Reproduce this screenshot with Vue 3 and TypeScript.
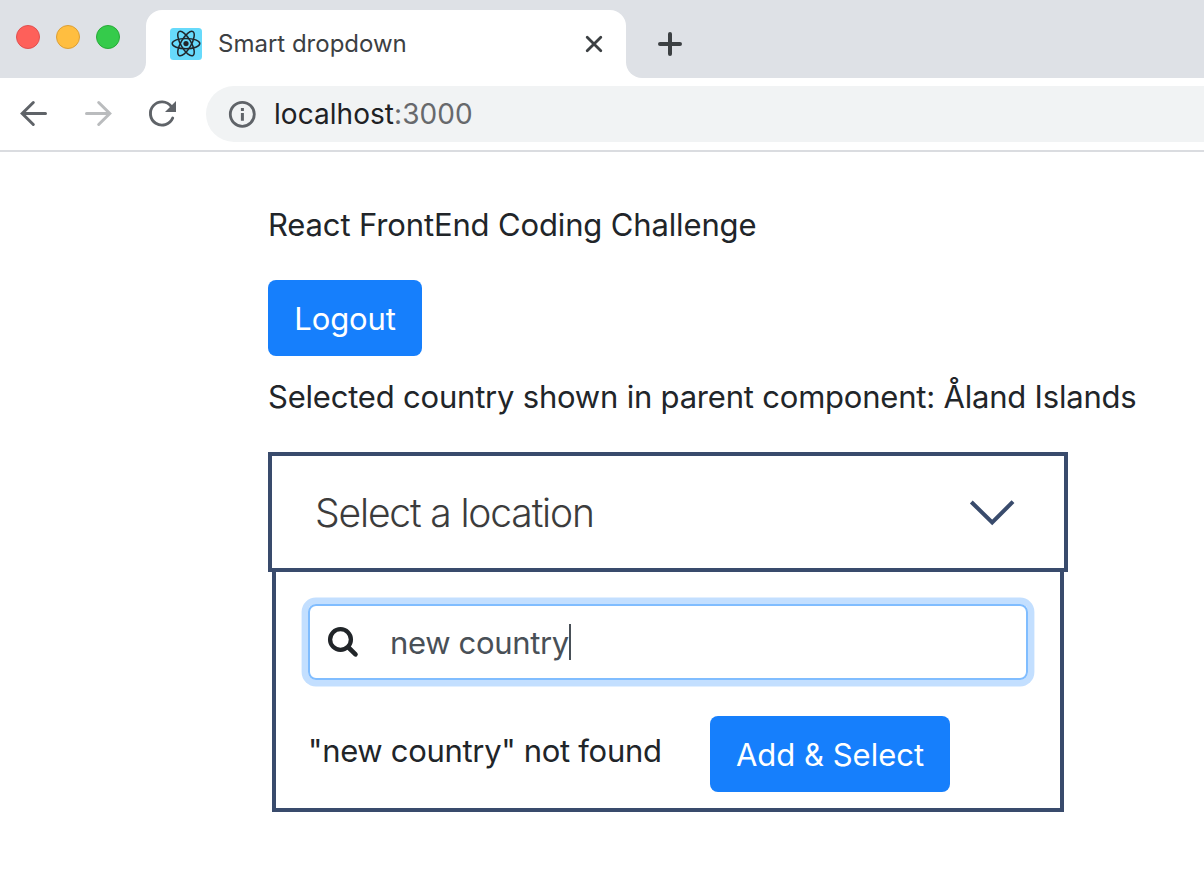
<script setup lang="ts">
import { ref } from 'vue'

const selectedCountry = ref('Åland Islands')
const query = ref('new country')
const orbits: number[] = [0, 60, 120]
</script>

<template>
  <div class="window">
    <header class="tab-strip">
      <div class="lights">
        <span class="light red"></span>
        <span class="light yellow"></span>
        <span class="light green"></span>
      </div>
      <div class="tab-slot">
        <div class="tab">
          <svg class="favicon" width="32" height="32" viewBox="0 0 32 32">
            <rect width="32" height="32" rx="3.5" fill="#67dafb" />
            <g fill="none" stroke="#20262b" stroke-width="1.5">
              <ellipse
                v-for="angle in orbits"
                :key="angle"
                cx="16"
                cy="15.6"
                rx="13.8"
                ry="5.2"
                :transform="`rotate(${angle} 16 15.6)`"
              />
            </g>
            <circle cx="16" cy="15.6" r="2.6" fill="#20262b" />
          </svg>
          <span class="tab-title">Smart dropdown</span>
          <svg class="close" width="18" height="18" viewBox="0 0 18 18">
            <path d="M2.2 2.2 15.8 15.8M15.8 2.2 2.2 15.8" fill="none" stroke="#3c4043" stroke-width="2.8" stroke-linecap="round" />
          </svg>
        </div>
      </div>
      <div class="strip-rest">
        <svg width="24" height="24" viewBox="0 0 24 24">
          <path d="M12 2V22M2 12H22" fill="none" stroke="#3c4043" stroke-width="4" stroke-linecap="round" />
        </svg>
      </div>
    </header>

    <nav class="toolbar">
      <svg class="nav-icon" width="28" height="28" viewBox="0 0 28 28">
        <path d="M25.5 13.5H2.5M13.3 2.5 2.2 13.5 13.3 24.5" fill="none" stroke="#5f6368" stroke-width="3" stroke-linecap="round" />
      </svg>
      <svg class="nav-icon" width="28" height="28" viewBox="0 0 28 28">
        <path d="M2.5 13.5H25.5M14.7 2.5 25.8 13.5 14.7 24.5" fill="none" stroke="#babcbe" stroke-width="3" stroke-linecap="round" />
      </svg>
      <svg class="nav-icon" width="28" height="28" viewBox="0 0 28 28">
        <path d="M23.2 6.4A11.6 11.6 0 1 0 24.7 18" fill="none" stroke="#5f6368" stroke-width="2.9" stroke-linecap="round" />
        <path d="M28 1V12H17Z" fill="#5f6368" />
      </svg>
      <div class="address">
        <svg width="28" height="28" viewBox="0 0 28 28">
          <circle cx="14.3" cy="14.3" r="12" fill="none" stroke="#5f6368" stroke-width="2.8" />
          <path d="M12.9 8h3v2.9h-3zM12.9 13.1h3v7.7h-3z" fill="#5f6368" />
        </svg>
        <span class="url"><span class="host">localhost</span>:3000</span>
      </div>
    </nav>

    <main class="page">
      <p class="line heading">React FrontEnd Coding Challenge</p>
      <button class="btn logout" type="button"><span>Logout</span></button>
      <p class="line selected">Selected country shown in parent component: {{ selectedCountry }}</p>

      <div class="dropdown">
        <div class="toggle">
          <span class="placeholder">Select a location</span>
          <svg width="46" height="28" viewBox="0 0 46 28">
            <path d="M2.3 4 23.2 24.4 44 3.7" fill="none" stroke="#394b6c" stroke-width="4" />
          </svg>
        </div>
        <div class="panel">
          <div class="search">
            <svg width="32" height="32" viewBox="0 0 32 32" fill="none" stroke="#212529">
              <circle cx="13.5" cy="13.5" r="10.4" stroke-width="4.3" />
              <path d="M21.5 21.5 28.5 28.3" stroke-width="4.6" stroke-linecap="round" />
            </svg>
            <span class="query">{{ query }}</span><span class="caret"></span>
          </div>
          <div class="result">
            <span class="message">"{{ query }}" not found</span>
            <button class="btn add" type="button"><span>Add &amp; Select</span></button>
          </div>
        </div>
      </div>
    </main>
  </div>
</template>

<style>
body {
  margin: 0;
  background: #fff;
}
</style>

<style scoped>
.window {
  height: 884px;
  overflow: hidden;
  background: #fff;
  font-family: Inter, "Liberation Sans", sans-serif;
  color: #212529;
}
.window * {
  box-sizing: border-box;
}
svg {
  display: block;
  flex: none;
}
span {
  white-space: nowrap;
}
.tab-strip {
  display: flex;
  height: 78px;
}
.lights {
  display: flex;
  gap: 16px;
  width: 146px;
  padding: 25px 0 0 16px;
  background: #dee1e6;
  border-bottom-right-radius: 16px;
}
.light {
  width: 24px;
  height: 24px;
  border-radius: 50%;
}
.red {
  background: #fe605a;
  border: 1px solid #e05050;
}
.yellow {
  background: #ffbe40;
  border: 1px solid #dc9f36;
}
.green {
  background: #35cb4b;
  border: 1px solid #28aa38;
}
.tab-slot {
  width: 480px;
  padding-top: 10px;
  background: #dee1e6;
}
.tab {
  display: flex;
  align-items: center;
  height: 68px;
  padding: 0 23px 0 24px;
  background: #fff;
  border-radius: 16px 16px 0 0;
}
.tab-title {
  flex: 1;
  margin-left: 16px;
  padding-bottom: 2px;
  font-size: 24px;
  color: #3c4043;
}
.strip-rest {
  flex: 1;
  padding: 32px 0 0 32px;
  background: #dee1e6;
  border-bottom-left-radius: 16px;
}
.toolbar {
  display: flex;
  align-items: center;
  height: 74px;
  padding: 0 0 2px 20px;
  border-bottom: 2px solid #dadce0;
}
.nav-icon {
  margin: 2px 36px 0 0;
}
.nav-icon:nth-child(3) {
  margin-right: 30px;
}
.address {
  display: flex;
  align-items: center;
  flex: 1;
  height: 56px;
  padding-left: 22px;
  margin-top: 2px;
  background: #f1f3f4;
  border-radius: 28px 0 0 28px;
}
.url {
  margin-left: 18px;
  font-size: 28px;
  letter-spacing: 0.05px;
  color: #67696c;
}
.host {
  color: #202124;
}
.page {
  padding: 49px 0 0 268px;
}
.line {
  margin: 0;
  font-size: 31px;
  line-height: 48px;
  white-space: nowrap;
}
.heading {
  margin-bottom: 31px;
  letter-spacing: -0.14px;
}
.btn {
  display: flex;
  align-items: center;
  justify-content: center;
  height: 76px;
  padding: 0;
  border: 0;
  border-radius: 8px;
  background: #167ffc;
  color: #fff;
  font: 31px Inter, "Liberation Sans", sans-serif;
}
.logout {
  width: 154px;
  letter-spacing: -0.15px;
}
.selected {
  margin-top: 17px;
  letter-spacing: -0.205px;
}
.dropdown {
  width: 800px;
  margin-top: 31px;
}
.toggle {
  display: flex;
  align-items: center;
  justify-content: space-between;
  height: 120px;
  padding: 0 49px 0 44px;
  border: 4px solid #394b6c;
}
.placeholder {
  margin-left: -1px;
  font-size: 39px;
  font-weight: 300;
  letter-spacing: -1.15px;
  color: #3c3c3c;
}
.panel {
  width: 792px;
  height: 240px;
  margin-left: 4px;
  padding: 32px 32px 0;
  border: 4px solid #394b6c;
  border-top: 0;
}
.search {
  display: flex;
  align-items: center;
  height: 76px;
  padding-left: 17px;
  border: 2px solid #80bdff;
  border-radius: 8px;
  box-shadow: 0 0 0 6.4px #c3dfff;
}
.query {
  margin-left: 31px;
  font-size: 31px;
  letter-spacing: -0.33px;
  color: #495057;
}
.caret {
  width: 2px;
  height: 36px;
  background: #495057;
}
.result {
  display: flex;
  align-items: center;
  margin-top: 36px;
}
.message {
  width: 402px;
  padding-bottom: 8px;
  font-size: 31px;
  letter-spacing: -0.31px;
}
.add {
  width: 240px;
}
</style>
